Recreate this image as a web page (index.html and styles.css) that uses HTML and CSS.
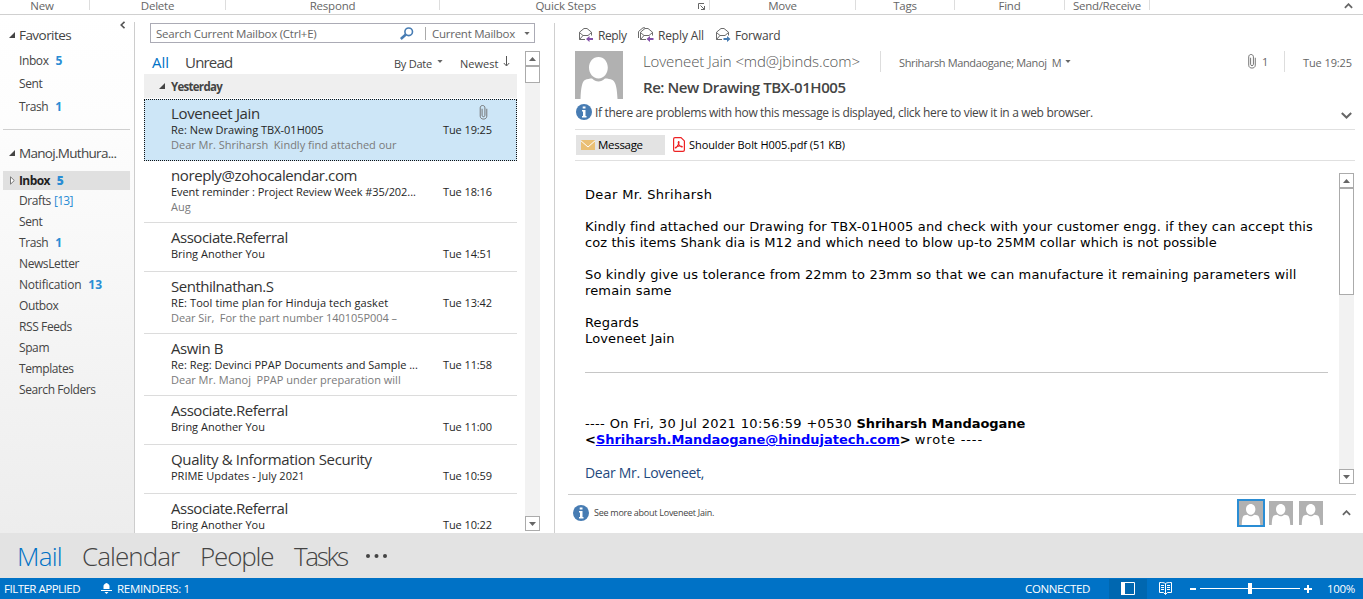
FILE: index.html
```html
<!DOCTYPE html>
<html lang="en">
<head>
<meta charset="utf-8">
<title>Inbox - Mail</title>
<link rel="stylesheet" href="styles.css">
</head>
<body>
<svg class="defs" width="0" height="0">
  <symbol id="person" viewBox="0 0 48 48"><path fill="#fff" d="M23.500 6c5.500 0 9.300 4.700 9.300 10.500S29 27.500 23.500 27.500 14 22.300 14 16.500 18 6 23.500 6zM5.500 48C6 37 7 30.500 10 29c2-1 5-1.500 7-1.500 4 4 9 4 13 0 3 0 5 .5 7.500 1.500C41 31 42 38 42.500 48z"/></symbol>
  <symbol id="envelope" viewBox="0 0 16 16"><path fill="none" stroke="#6b6b6b" d="M7 12.500H1.500V5.200L6 1.500h3l4.500 3.700v3.300M1.500 5.500L5 8.500h5l3.500-3M1.500 12.500L5 8.500"/></symbol>
  <symbol id="info" viewBox="0 0 16 16"><circle cx="8" cy="8" r="8" fill="#477cb3"/><path fill="#fff" d="M6.700 2.500h2.800v2H6.700zM6 6h3.500v6h1v1.500H6V12h1V7.500H6z"/></symbol>
  <symbol id="clip" viewBox="0 0 8 16"><path fill="none" stroke="#6d6d6d" d="M2.500 4v7c0 2 3 2 3 0V3c0-3.300-5-3.300-5 0v9c0 4 7 4 7 0V4"/></symbol>
  <symbol id="up" viewBox="0 0 10 6"><path fill="none" stroke="#666" stroke-width="2" d="M1 5l4-4 4 4"/></symbol>
  <symbol id="arrow-up" viewBox="0 0 7 4"><path fill="#666" d="M0 4L3.500 0 7 4z"/></symbol>
  <symbol id="arrow-down" viewBox="0 0 7 4"><path fill="#666" d="M0 0h7L3.500 4z"/></symbol>
  <symbol id="corner" viewBox="0 0 6 6"><path fill="#444" d="M6 0v6H0z"/></symbol>
</svg>

<div class="app">
  <header class="ribbon">
    <div class="group g-new">New</div>
    <div class="group g-delete">Delete</div>
    <div class="group g-respond">Respond</div>
    <div class="group g-quick">Quick Steps<svg class="launcher" width="7" height="7"><path fill="none" stroke="#666" d="M.5 6V.5H6M2.500 2.500l4 4M6.500 3v3.500H3"/></svg></div>
    <div class="group g-move">Move</div>
    <div class="group g-tags">Tags</div>
    <div class="group g-find">Find</div>
    <div class="group g-send">Send/Receive</div>
    <svg class="ribbon-up" width="9" height="6"><use href="#up"/></svg>
  </header>

  <main class="main">
    <nav class="folders">
      <div class="head"><svg width="6" height="6"><use href="#corner"/></svg>Favorites<svg class="collapse" width="5" height="8"><path fill="none" stroke="#555" stroke-width="1.600" d="M4.500.8L1.200 4l3.300 3.200"/></svg></div>
      <div class="fav">Inbox<b>5</b></div>
      <div class="fav">Sent</div>
      <div class="fav">Trash<b>1</b></div>
      <div class="rule"></div>
      <div class="head account"><svg width="6" height="6"><use href="#corner"/></svg>Manoj.Muthura...</div>
      <div class="folder active"><svg width="5" height="9"><path fill="#fff" stroke="#777" d="M.5.8v7.400L4.300 4.500z"/></svg>Inbox<b>5</b></div>
      <div class="folder">Drafts<i>[13]</i></div>
      <div class="folder">Sent</div>
      <div class="folder">Trash<b>1</b></div>
      <div class="folder">NewsLetter</div>
      <div class="folder wide">Notification<b>13</b></div>
      <div class="folder">Outbox</div>
      <div class="folder">RSS Feeds</div>
      <div class="folder">Spam</div>
      <div class="folder">Templates</div>
      <div class="folder">Search Folders</div>
    </nav>

    <section class="list">
      <div class="search">
        <span class="query">Search Current Mailbox (Ctrl+E)</span>
        <svg width="14" height="13"><circle cx="8.700" cy="4.800" r="3.800" fill="none" stroke="#477cb3" stroke-width="1.600"/><path stroke="#477cb3" stroke-width="2.600" d="M5.800 7.500L.8 12"/></svg>
        <span class="scope">Current Mailbox</span>
        <svg class="drop" width="6" height="3"><use href="#arrow-down"/></svg>
      </div>
      <div class="below">
        <div class="messages">
          <div class="tabs"><span class="all">All</span><span class="unread">Unread</span><span class="sort">By Date</span><svg class="sort-drop" width="6" height="3"><use href="#arrow-down"/></svg><span class="newest">Newest</span><svg class="sort-dir" width="7" height="11"><path fill="none" stroke="#555" d="M3.500 0v9.500M.8 7l2.700 3 2.700-3"/></svg></div>
          <div class="day"><svg width="6" height="6"><use href="#corner"/></svg>Yesterday</div>
          <article class="item selected"><h3>Loveneet Jain</h3><svg class="attached" width="9" height="15"><use href="#clip"/></svg><div class="line"><span>Re: New Drawing TBX-01H005</span><time>Tue 19:25</time></div><p>Dear Mr. Shriharsh&nbsp; Kindly find attached our</p></article>
          <article class="item"><h3 class="tight">noreply@zohocalendar.com</h3><div class="line"><span class="close">Event reminder : Project Review Week #35/202...</span><time>Tue 18:16</time></div><p>Aug</p></article>
          <article class="item"><h3 class="tighter">Associate.Referral</h3><div class="line"><span>Bring Another You</span><time>Tue 14:51</time></div></article>
          <article class="item"><h3 class="tighter">Senthilnathan.S</h3><div class="line"><span class="loose">RE: Tool time plan for Hinduja tech gasket</span><time>Tue 13:42</time></div><p class="close">Dear Sir,&nbsp; For the part number 140105P004 –</p></article>
          <article class="item"><h3 class="tight">Aswin B</h3><div class="line"><span>Re: Reg: Devinci PPAP Documents and Sample ...</span><time>Tue 11:58</time></div><p>Dear Mr. Manoj&nbsp; PPAP under preparation will</p></article>
          <article class="item"><h3 class="tighter">Associate.Referral</h3><div class="line"><span>Bring Another You</span><time>Tue 11:00</time></div></article>
          <article class="item"><h3>Quality &amp; Information Security</h3><div class="line"><span>PRIME Updates - July 2021</span><time>Tue 10:59</time></div></article>
          <article class="item"><h3 class="tighter">Associate.Referral</h3><div class="line"><span>Bring Another You</span><time>Tue 10:22</time></div></article>
        </div>
        <div class="scroll list-scroll">
          <div class="btn"><svg width="7" height="4"><use href="#arrow-up"/></svg></div>
          <div class="thumb"></div>
          <div class="track"></div>
          <div class="btn"><svg width="7" height="4"><use href="#arrow-down"/></svg></div>
        </div>
      </div>
    </section>

    <section class="reader">
      <div class="actions">
        <svg width="16" height="16"><use href="#envelope"/><path fill="#8450a8" d="M8 12l3.500-3v2H15v2h-3.500v2z"/></svg><span class="reply">Reply</span>
        <svg width="18" height="16"><path fill="none" stroke="#6b6b6b" d="M.5 11V4.500L5 .8h2"/><use href="#envelope" x="1" width="16" height="16"/><path fill="#8450a8" d="M8.500 12L12 9v2h3.500v2H12v2z"/></svg><span class="reply-all">Reply All</span>
        <svg width="16" height="16"><use href="#envelope"/><path fill="#477cb3" d="M15.500 12L12 9v2H8.500v2H12v2z"/></svg><span class="forward">Forward</span>
      </div>
      <div class="sender">
        <svg class="avatar" width="48" height="48"><use href="#person"/></svg>
        <div class="titles">
          <div class="meta">
            <span class="from">Loveneet Jain &lt;md@jbinds.com&gt;</span>
            <span class="to">Shriharsh Mandaogane; Manoj&nbsp; M</span>
            <svg width="6" height="3"><use href="#arrow-down"/></svg>
            <svg class="meta-clip" width="8" height="15"><use href="#clip"/></svg><span class="count">1</span>
            <span class="when">Tue 19:25</span>
          </div>
          <h1>Re: New Drawing TBX-01H005</h1>
        </div>
      </div>
      <div class="notice"><svg width="16" height="16"><use href="#info"/></svg><span>If there are problems with how this message is displayed, click here to view it in a web browser.</span><svg class="expand" width="11" height="7"><path fill="none" stroke="#666" stroke-width="2" d="M.8 1l4.700 4.500L10.200 1"/></svg></div>
      <div class="files">
        <div class="chip"><svg width="14" height="10"><path fill="#eabf74" d="M0 0h14v10H0z"/><path fill="none" stroke="#fff" d="M0 .8L7 7l7-6.200"/></svg>Message</div>
        <svg width="12" height="15"><path fill="#fff" stroke="#ed2224" stroke-width="1.200" d="M2 .6h6l3.400 3.300V13c0 .8-.5 1.400-1.400 1.400H2c-.9 0-1.400-.6-1.400-1.400V2C.6 1.100 1.100.6 2 .6z"/><path fill="none" stroke="#ed2224" stroke-width="1.100" d="M5.500 4.500c1.500 0-.3 4.500-2.800 6.500-1 .3-.6-1.500 4-2 3-.2 3.200 1.500 1.500.8C6 8.500 4.500 6 5.500 4.500z"/></svg>
        <span>Shoulder Bolt H005.pdf (51 KB)</span>
      </div>
      <div class="content">
        <div class="body">
          <p class="greeting">Dear Mr. Shriharsh</p>
          <p>Kindly find attached our Drawing for TBX-01H005 and check with your customer engg. if they can accept this<br><span class="narrow">coz this items Shank dia is M12 and which need to blow up-to 25MM collar which is not possible</span></p>
          <p><span class="roomy">So kindly give us tolerance from 22mm to 23mm so that we can manufacture it remaining parameters will</span><br>remain same</p>
          <p>Regards<br>Loveneet Jain</p>
          <hr>
          <p class="quote"><span class="stamp">---- On Fri, 30 Jul 2021 10:56:59 +0530</span> <b>Shriharsh Mandaogane<br>&lt;<a>Shriharsh.Mandaogane@hindujatech.com</a>&gt;</b> <span class="wrote">wrote ----</span></p>
          <p class="old">Dear Mr. Loveneet,</p>
        </div>
        <div class="scroll body-scroll">
          <div class="btn"><svg width="7" height="4"><use href="#arrow-up"/></svg></div>
          <div class="thumb"></div>
          <div class="track"></div>
          <div class="btn"><svg width="7" height="4"><use href="#arrow-down"/></svg></div>
        </div>
      </div>
      <div class="people">
        <svg width="16" height="16"><use href="#info"/></svg><span>See more about Loveneet Jain.</span>
        <svg class="face current" viewBox="0 0 24 24"><use href="#person" width="24" height="24"/></svg>
        <svg class="face" width="24" height="24"><use href="#person"/></svg>
        <svg class="face" width="24" height="24"><use href="#person"/></svg>
        <svg class="people-up" width="9" height="6"><use href="#up"/></svg>
      </div>
    </section>
  </main>

  <nav class="modules"><span class="mail">Mail</span><span class="calendar">Calendar</span><span class="contacts">People</span><span class="tasks">Tasks</span><svg width="21" height="4"><g fill="#444"><circle cx="2" cy="2" r="2"/><circle cx="10.500" cy="2" r="2"/><circle cx="19" cy="2" r="2"/></g></svg></nav>

  <footer class="status">
    <span class="filter">FILTER APPLIED</span>
    <svg width="11" height="11"><path fill="#fff" d="M2.500 6V3C2.500 1.300 4 .8 5.500 0 7 .8 8.500 1.300 8.500 3v3zM0 7h11v1H0zM3.500 9h4L5.500 11z"/></svg>
    <span class="reminders">REMINDERS: 1</span>
    <span class="connected">CONNECTED</span>
    <div class="view"><svg width="14" height="13"><path fill="none" stroke="#fff" d="M.5.5h13v12H.5z"/><path fill="#fff" d="M0 0h4v13H0z"/></svg></div>
    <svg class="book" width="13" height="13"><path fill="none" stroke="#fff" d="M6.500 12.500V1.500C5 .5 3 .5.500.5v10h4l2 2 2-2h4V.5c-2.500 0-4.500 0-6 1M2 3.500h3M2 5.500h3M2 7.500h3M8 3.500h3M8 5.500h3M8 7.500h3"/></svg>
    <svg class="zoom" width="122" height="12"><path fill="#fff" d="M0 5h6v2H0zM10 5h100v1H10zM58 0h4v11h-4zM114 5h8v2h-8zM117 2h2v8h-2z"/></svg>
    <span class="percent">100%</span>
  </footer>
</div>
</body>
</html>
```
FILE: styles.css
```css
* { box-sizing: border-box; }
body { margin: 0; overflow: hidden; background: #fff; color: #444; font: 12px "Open Sans", "Noto Sans", sans-serif; white-space: nowrap; }
svg { display: block; flex: none; }
h1, h3, p { margin: 0; font-weight: 400; }
.defs { position: absolute; }
.app { display: flex; flex-direction: column; width: 1363px; height: 599px; }

.ribbon { display: flex; flex: none; height: 15px; border-bottom: 1px solid #d0d0d0; color: #666; }
.group { flex: none; height: 10px; border-right: 1px solid #ddd; font-size: 11.5px; line-height: 12px; text-align: center; letter-spacing: -.2px; }
.g-new { width: 90px; padding-right: 5px; }
.g-delete { width: 136px; }
.g-respond { width: 214px; }
.g-quick { display: flex; justify-content: flex-end; width: 270px; padding-right: 4px; }
.launcher { margin: 3px 0 0 102px; }
.g-move { width: 146px; }
.g-tags { width: 99px; }
.g-find { width: 110px; }
.g-send { width: 85px; letter-spacing: -.32px; }
.ribbon-up { margin: 3px 0 0 194px; }

.main { display: flex; flex: none; height: 518px; }

.folders { flex: none; width: 135px; padding: 8px 0 0; background: linear-gradient(#fff, #fdfdfd 20%, #ededed); border-right: 1px solid #d0d0d0; border-image: linear-gradient(transparent 8px, #cdcdcd 8px) 1; border-width: 0 1px 0 0; letter-spacing: -.4px; }
.head { display: flex; align-items: center; height: 24px; padding-left: 9px; font-size: 13.5px; letter-spacing: -.55px; }
.head svg { margin-right: 4px; }
.head .collapse { align-self: flex-start; margin: -2px 0 0 49px; }
.head.account { letter-spacing: -.7px; }
.fav { height: 23px; padding-left: 19px; line-height: 23px; }
.head + .fav { margin-top: 2px; }
.folders b { margin-left: 7px; color: #2a8dd4; letter-spacing: 0; }
.folders i { margin-left: 3px; color: #2a8dd4; font-style: normal; letter-spacing: -.7px; }
.rule { height: 1px; margin: 11px 4px 11px 3px; background: #cfcfcf; }
.folder { height: 21px; padding-left: 19px; line-height: 21px; }
.folder.wide { letter-spacing: -.22px; }
.folder.active { display: flex; align-items: center; height: 19px; margin: 6px 4px 0 3px; padding-left: 7px; line-height: 19px; background: #e0e0e0; color: #222; font-weight: 700; letter-spacing: -.6px; }
.folder.active svg { margin-right: 4px; }

.list { flex: none; width: 420px; height: 510px; margin-top: 8px; padding-left: 9px; border-right: 1px solid #cfcfcf; }
.search { display: flex; align-items: center; width: 385px; height: 20px; margin-left: 6px; padding-left: 5px; border: 1px solid #ababb5; color: #666; }
.query { width: 244px; font-size: 11.5px; letter-spacing: -.24px; }
.scope { width: 96px; margin-left: 11px; padding-left: 6px; border-left: 1px solid #aaa; font-size: 11.5px; line-height: 13px; letter-spacing: -.26px; }
.drop { margin-left: 3px; }
.below { display: flex; height: 490px; }
.messages { width: 373px; height: 490px; overflow: hidden; }
.tabs { display: flex; align-items: center; height: 31px; padding: 7px 0 0 8px; font-size: 11px; }
.all { width: 33px; color: #0072c6; font-size: 15px; letter-spacing: 0; }
.unread { width: 209px; font-size: 15px; letter-spacing: -.8px; }
.sort { width: 43px; margin-top: 2px; letter-spacing: -.24px; }
.newest { margin: 2px 0 0 17px; width: 43px; }
.sort-drop { margin-top: -1px; }
.sort-dir { margin-top: -1px; }
.day { display: flex; align-items: center; height: 25px; padding: 0 0 1px 15px; background: #efefef; box-shadow: inset 0 -1px #fff; font-size: 11.5px; font-weight: 700; letter-spacing: -.72px; }
.day svg { margin-right: 6px; }
.item { position: relative; height: 49px; padding: 5px 25px 0 27px; border-bottom: 1px solid #dcdcdc; color: #262626; font-size: 11px; line-height: 15px; }
.item:has(p) { height: 62px; }
.item h3 { font-size: 15px; line-height: 18px; letter-spacing: -.35px; color: #333; }
.item h3.tight { letter-spacing: -.4px; }
.item h3.tighter { letter-spacing: -.48px; }
.item p { color: #7a7a7a; }
.close { letter-spacing: -.06px; }
.loose { letter-spacing: .09px; }
.item .line { display: flex; justify-content: space-between; }
.item time { letter-spacing: -.1px; }
.item.selected { height: 62px; background: #cde6f7; border: 1px dotted #111; padding: 4px 24px 0 26px; box-shadow: 0 1px #fff; }
.attached { position: absolute; top: 5px; right: 28px; }

.scroll { display: flex; flex-direction: column; flex: none; width: 15px; background: #f2f2f2; }
.btn { display: flex; align-items: center; justify-content: center; flex: none; height: 15px; border: 1px solid #ababab; background: #fff; }
.thumb { flex: none; border: 1px solid #ababab; background: #fff; }
.track { flex: 1; }
.list-scroll { height: 480px; margin: 8px 0 0 8px; }
.list-scroll .thumb { height: 17px; }

.reader { width: 808px; padding-top: 10px; }
.actions { display: flex; align-items: center; height: 20px; padding-left: 23px; letter-spacing: -.15px; }
.reply { width: 40px; margin-left: 4px; letter-spacing: -.4px; }
.reply-all { width: 57px; margin-left: 2px; }
.forward { margin-left: 4px; }
.sender { display: flex; margin: 6px 0 0 20px; }
.avatar { background: #b1b1b1; }
.titles { width: 734px; padding-left: 20px; }
.meta { display: flex; align-items: center; height: 21px; color: #666; font-size: 11px; }
.meta > * { flex: none; }
.from { width: 238px; border-right: 1px solid #ddd; font-size: 15px; font-weight: 300; line-height: 21px; letter-spacing: -.09px; color: #555; }
.to { width: 166px; margin: 2px 0 0 18px; letter-spacing: -.36px; }
.meta-clip { margin-left: 177px; }
.count { width: 23px; margin-left: 6px; border-right: 1px solid #ddd; line-height: 21px; }
.when { margin: 2px 0 0 18px; letter-spacing: -.1px; }
h1 { margin-top: 5px; font-size: 15px; font-weight: 600; line-height: 21px; letter-spacing: -.43px; }
.notice { display: flex; align-items: center; height: 31px; margin: 0 8px 0 20px; padding: 0 3px 4px 1px; border-bottom: 1px solid #e0e0e0; letter-spacing: -.34px; }
.notice span { margin-left: 3px; }
.expand { margin: 6px 0 0 auto; }
.files { display: flex; align-items: center; height: 31px; margin: 0 8px 0 20px; padding: 0 0 1px 1px; border-bottom: 1px solid #e0e0e0; color: #000; font-size: 11px; letter-spacing: -.07px; }
.chip { display: flex; align-items: center; width: 89px; height: 20px; margin-right: 8px; padding-left: 5px; background: #e3e3e3; font-size: 11.5px; letter-spacing: -.3px; }
.chip svg { margin-right: 3px; }
.files > span { margin-left: 4px; }
.content { display: flex; height: 334px; margin: 0 7px 0 13px; padding-top: 12px; border-bottom: 1px solid #ccc; }
.body { width: 771px; padding: 14px 11px 0 17px; color: #000; font: 13px/16px "DejaVu Sans", Verdana, sans-serif; letter-spacing: .148px; }
.body p { margin-bottom: 16px; }
.body .greeting { letter-spacing: .34px; }
.narrow { letter-spacing: .08px; }
.roomy { letter-spacing: .175px; }
.wrote { letter-spacing: .85px; }
.body hr { height: 1px; margin: 25px 0 43px; border: 0; background: #c6c6c6; }
.stamp { letter-spacing: .35px; }
.body b { letter-spacing: -.03px; }
.body a { color: #00f; text-decoration: underline; }
.body .quote { margin-bottom: 17px; }
.body .old { color: #1f497d; font: 14px/16px "Open Sans", sans-serif; letter-spacing: -.29px; }
.body-scroll { height: 311px; }
.body-scroll .thumb { height: 107px; }
.people { display: flex; align-items: center; height: 36px; padding-left: 18px; font-size: 9px; }
.people span { width: 643px; margin: -2px 0 0 5px; letter-spacing: -.26px; }
.face { margin-right: 6px; background: #b1b1b1; }
.face.current { width: 28px; height: 28px; margin-right: 4px; border: 2px solid #2a8dd4; }
.people-up { margin-left: 13px; }

.modules { display: flex; align-items: center; flex: none; height: 45px; padding-left: 17px; background: #e3e3e3; color: #444; font-size: 26px; font-weight: 300; }
.mail { width: 65px; color: #0072c6; letter-spacing: -.75px; }
.calendar { width: 118px; letter-spacing: -.95px; }
.contacts { width: 94px; letter-spacing: -1.15px; }
.tasks { width: 72px; letter-spacing: -2.3px; }
.modules svg { margin-top: 0; }

.status { display: flex; align-items: center; flex: none; height: 21px; padding-left: 4px; background: #0072c6; color: #fff; font-size: 11.5px; letter-spacing: -.36px; }
.filter { width: 97px; letter-spacing: -.5px; }
.reminders { width: 908px; margin-left: 5px; letter-spacing: -.3px; }
.connected { width: 84px; }
.view { display: flex; align-items: center; justify-content: center; width: 38px; height: 20px; background: #0067b0; }
.book { margin-left: 12px; }
.zoom { margin-left: 18px; }
.percent { margin-left: 15px; }
```
